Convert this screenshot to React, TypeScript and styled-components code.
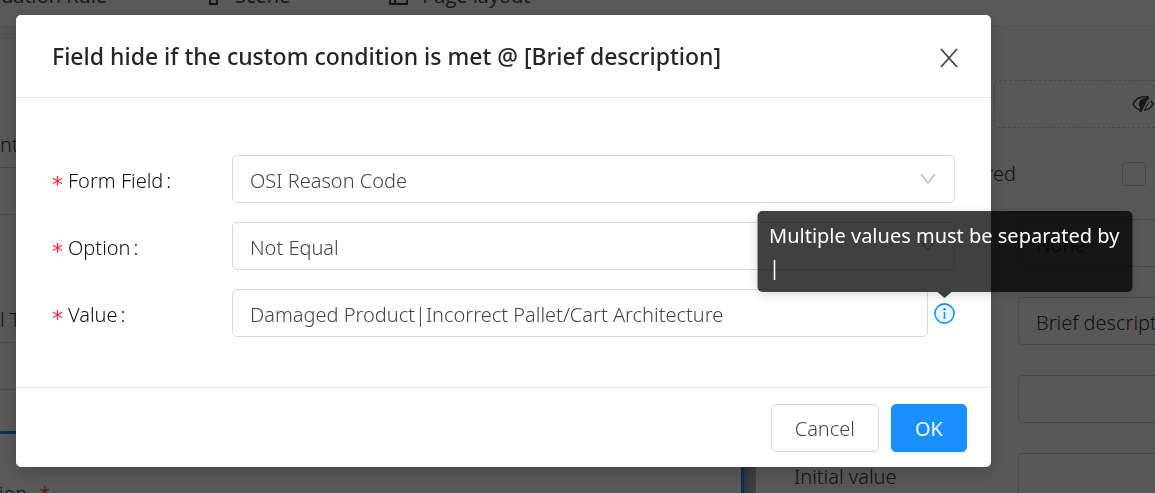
import React from 'react';
import styled, { createGlobalStyle } from 'styled-components';

const GlobalStyle = createGlobalStyle`
  *, *::before, *::after { box-sizing: border-box; }
  body {
    margin: 0;
    overflow: hidden;
    font-family: 'Noto Sans', 'Open Sans', sans-serif;
    font-size: 20px;
    font-weight: 300;
    line-height: 32px;
    color: #333;
  }
  button, input, select { font: inherit; }
`;

/* ---------- page behind the dialog ---------- */

const Page = styled.div`
  height: 100vh;
  display: flex;
  flex-direction: column;
  overflow: hidden;
  background: #f5f5f5;
`;

const TabBar = styled.nav`
  display: flex;
  align-items: flex-end;
  gap: 99px;
  height: 27px;
  padding-bottom: 14px;
  font-family: 'Open Sans', 'Noto Sans', sans-serif;
  font-weight: 400;
  background: #fff;
  border-bottom: 1px solid #e8e8e8;
`;

const Tab = styled.a`
  display: flex;
  align-items: center;
  gap: 14px;
  color: #444;
  text-decoration: none;
  white-space: nowrap;

  &:first-child { margin-left: -32px; }
`;

const Columns = styled.div`
  flex: 1;
  display: flex;
  min-height: 0;
`;

const Canvas = styled.section`
  flex: 1;
  display: flex;
  flex-direction: column;
  min-width: 0;
  margin-top: 11px;
  background: #fff;
  border-top: 1px solid #e8e8e8;
`;

const CanvasField = styled.div<{ $gap: number }>`
  display: flex;
  flex-direction: column;
  gap: 6px;
  margin-top: ${(p) => p.$gap}px;
`;

const CanvasBox = styled.div`
  height: 48px;
  border: 1px solid #d9d9d9;
  border-left: 0;
`;

const SelectedField = styled.div`
  flex: 1;
  display: flex;
  gap: 12px;
  margin: 41px 0 0 -8px;
  padding-top: 44px;
  border: solid #1890ff;
  border-width: 3px 3px 0 0;
`;

const Red = styled.span`
  color: #f5222d;
`;

const Gutter = styled.div`
  width: 12px;
  background: linear-gradient(to right, #999, #bbb);
`;

const Properties = styled.aside`
  display: flex;
  flex-direction: column;
  gap: 30px;
  width: 399px;
  padding: 53px 0 0 38px;
  overflow: hidden;
  background: #fdfdfd;
`;

const DashedBox = styled.div`
  display: flex;
  flex: none;
  align-items: center;
  justify-content: flex-end;
  height: 48px;
  margin-left: 200px;
  border: 1px dashed #ccc;
  border-right: 0;
  border-radius: 5px 0 0 5px;
`;

const Property = styled.label`
  display: grid;
  flex: none;
  grid-template-columns: 224px 1fr;
  align-items: center;
  height: 48px;
`;

const RequiredRow = styled.label`
  display: flex;
  flex: none;
  align-items: center;
  justify-content: space-between;
  height: 31px;
  padding: 0 9px 0 140px;
`;

const Tick = styled.input`
  appearance: none;
  width: 24px;
  height: 24px;
  margin: 0;
  border: 1px solid #ccc;
  border-radius: 3px;
`;

const PropertyInput = styled.input`
  grid-column: 2;
  width: 100%;
  height: 48px;
  padding: 2px 0 0 17px;
  color: #333;
  background: transparent;
  border: 1px solid #d0d0d0;
  border-right: 0;
  border-radius: 5px 0 0 5px;
`;

/* ---------- dialog ---------- */

const Mask = styled.div`
  position: fixed;
  inset: 0;
  padding: 15px 164px 0 16px;
  background: rgba(0, 0, 0, 0.65);
`;

const Dialog = styled.div`
  background: #fff;
  border-radius: 5px;
  box-shadow: 0 6px 18px rgba(0, 0, 0, 0.2);
`;

const DialogHeader = styled.header`
  display: flex;
  align-items: center;
  justify-content: space-between;
  height: 83px;
  padding: 0 33px 0 36px;
  border-bottom: 1px solid #e8e8e8;
`;

const Title = styled.h1`
  margin: 0;
  font-size: 23px;
  font-weight: 500;
  color: #262626;
`;

const CloseButton = styled.button`
  display: flex;
  padding: 4px 0 0;
  color: #444;
  background: none;
  border: 0;
`;

const DialogBody = styled.form`
  display: flex;
  flex-direction: column;
  gap: 19px;
  padding: 57px 36px 50px;
`;

const FormRow = styled.div`
  display: grid;
  grid-template-columns: 180px 1fr;
  align-items: center;
`;

const Label = styled.label`
  display: flex;
  align-items: center;
  height: 48px;
  padding-top: 4px;
  color: #111;

  &::before {
    content: '*';
    width: 16px;
    padding-top: 8px;
    font-family: 'DejaVu Sans', sans-serif;
    font-size: 22px;
    font-weight: 400;
    color: #f5222d;
  }

  &::after {
    content: ':';
    margin-left: 3px;
  }
`;

const Control = styled.div`
  position: relative;
  display: flex;
  align-items: center;
  gap: 6px;
`;

const fieldStyle = `
  flex: 1;
  min-width: 0;
  height: 48px;
  padding: 3px 17px 0;
  color: #444;
  background: #fff;
  border: 1px solid #d9d9d9;
  border-radius: 5px;
  outline: 0;
`;

const Select = styled.select`
  appearance: none;
  ${fieldStyle}
`;

const TextInput = styled.input`
  ${fieldStyle}
`;

const Chevron = styled.svg`
  position: absolute;
  right: 19px;
  color: #bfbfbf;
  pointer-events: none;
`;

const InfoButton = styled.button`
  position: relative;
  display: flex;
  padding: 0;
  background: none;
  border: 0;
`;

const Tooltip = styled.span`
  position: absolute;
  bottom: calc(100% + 11px);
  left: 50%;
  z-index: 1;
  width: 375px;
  padding: 9px 12px 8px;
  font-weight: 400;
  text-align: left;
  color: #fff;
  background: rgba(0, 0, 0, 0.75);
  border-radius: 5px;
  box-shadow: 0 3px 12px rgba(0, 0, 0, 0.15);
  transform: translateX(-50%);

  &::after {
    content: '';
    position: absolute;
    top: 100%;
    left: 50%;
    margin-left: -7px;
    border: solid transparent;
    border-width: 6px 7px 0;
    border-top-color: rgba(0, 0, 0, 0.75);
  }
`;

const DialogFooter = styled.footer`
  display: flex;
  justify-content: flex-end;
  gap: 12px;
  padding: 16px 24px 15px;
  border-top: 1px solid #e8e8e8;
`;

const Button = styled.button<{ $primary?: boolean }>`
  height: 48px;
  padding: 2px 23px 0;
  font-weight: ${(p) => (p.$primary ? 400 : 300)};
  color: ${(p) => (p.$primary ? '#fff' : '#444')};
  background: ${(p) => (p.$primary ? '#1890ff' : '#fff')};
  border: 1px solid ${(p) => (p.$primary ? '#1890ff' : '#d9d9d9')};
  border-radius: 5px;
  box-shadow: 0 3px 0 rgba(0, 0, 0, ${(p) => (p.$primary ? 0.045 : 0.015)});
`;

const Arrow = () => (
  <Chevron width="16" height="12" viewBox="0 0 16 12" fill="none" stroke="currentColor" strokeWidth="1.5">
    <path d="M1 1l7 9 7-9" />
  </Chevron>
);

export default function App() {
  return (
    <>
      <GlobalStyle />
      <Page>
        <TabBar>
          <Tab href="#validation">Validation Rule</Tab>
          <Tab href="#scene">
            <svg width="15" height="20" viewBox="0 0 15 20" fill="none" stroke="currentColor" strokeWidth="2">
              <path d="M2 2h11v8H2zM4 10v8h7v-8" />
            </svg>
            Scene
          </Tab>
          <Tab href="#layout">
            <svg width="19" height="20" viewBox="0 0 19 20" fill="none" stroke="currentColor" strokeWidth="2">
              <path d="M1 1h17v17H1zM1 6h17M6 6v12" />
            </svg>
            Page layout
          </Tab>
        </TabBar>
        <Columns>
          <Canvas>
            <CanvasField $gap={90}>
              nt
              <CanvasBox />
            </CanvasField>
            <CanvasField $gap={89}>
              l T
              <CanvasBox />
            </CanvasField>
            <SelectedField>
              tion <Red>*</Red>
            </SelectedField>
          </Canvas>
          <Gutter />
          <Properties>
            <DashedBox>
              <svg width="23" height="18" viewBox="0 0 23 18" fill="none" stroke="#444" strokeWidth="1.5">
                <path d="M10 15C6 15 3 13 1 9c4-8 13-9 16-5M19 6l2 3c-2 4-5 6-9 6" />
                <path d="M16 1L8 17" strokeWidth="2.5" />
                <path d="M13 4a5 5 0 0 0-5 7l1 2z" fill="#444" />
                <path d="M17 7l-4 7" strokeWidth="1" />
              </svg>
            </DashedBox>
            <RequiredRow>
              Required
              <Tick type="checkbox" />
            </RequiredRow>
            <Property>
              <PropertyInput defaultValue="None" />
            </Property>
            <Property>
              <PropertyInput defaultValue="Brief description" />
            </Property>
            <Property>
              <PropertyInput />
            </Property>
            <Property>
              Initial value
              <PropertyInput />
            </Property>
          </Properties>
        </Columns>
      </Page>

      <Mask>
        <Dialog role="dialog" aria-modal="true" aria-labelledby="dialog-title">
          <DialogHeader>
            <Title id="dialog-title">Field hide if the custom condition is met @ [Brief description]</Title>
            <CloseButton type="button" aria-label="Close">
              <svg width="18" height="20" viewBox="0 0 18 20" fill="none" stroke="currentColor" strokeWidth="1.8">
                <path d="M1 1l16 18M17 1L1 19" />
              </svg>
            </CloseButton>
          </DialogHeader>
          <DialogBody id="condition">
            <FormRow>
              <Label htmlFor="field">Form Field</Label>
              <Control>
                <Select id="field">
                  <option>OSI Reason Code</option>
                </Select>
                <Arrow />
              </Control>
            </FormRow>
            <FormRow>
              <Label htmlFor="option">Option</Label>
              <Control>
                <Select id="option">
                  <option>Not Equal</option>
                </Select>
                <Arrow />
              </Control>
            </FormRow>
            <FormRow>
              <Label htmlFor="value">Value</Label>
              <Control>
                <TextInput id="value" defaultValue="Damaged Product|Incorrect Pallet/Cart Architecture" />
                <InfoButton type="button" aria-describedby="value-tip">
                  <svg width="21" height="21" viewBox="0 0 21 21">
                    <circle cx="10.5" cy="10.5" r="9.6" fill="#e6f7ff" stroke="#1890ff" strokeWidth="1.6" />
                    <circle cx="10.5" cy="6.2" r="1.2" fill="#1890ff" />
                    <path d="M10.5 9v7" stroke="#1890ff" strokeWidth="1.6" />
                  </svg>
                  <Tooltip id="value-tip" role="tooltip">
                    Multiple values must be separated by |
                  </Tooltip>
                </InfoButton>
              </Control>
            </FormRow>
          </DialogBody>
          <DialogFooter>
            <Button type="button">Cancel</Button>
            <Button type="submit" form="condition" $primary>
              OK
            </Button>
          </DialogFooter>
        </Dialog>
      </Mask>
    </>
  );
}
